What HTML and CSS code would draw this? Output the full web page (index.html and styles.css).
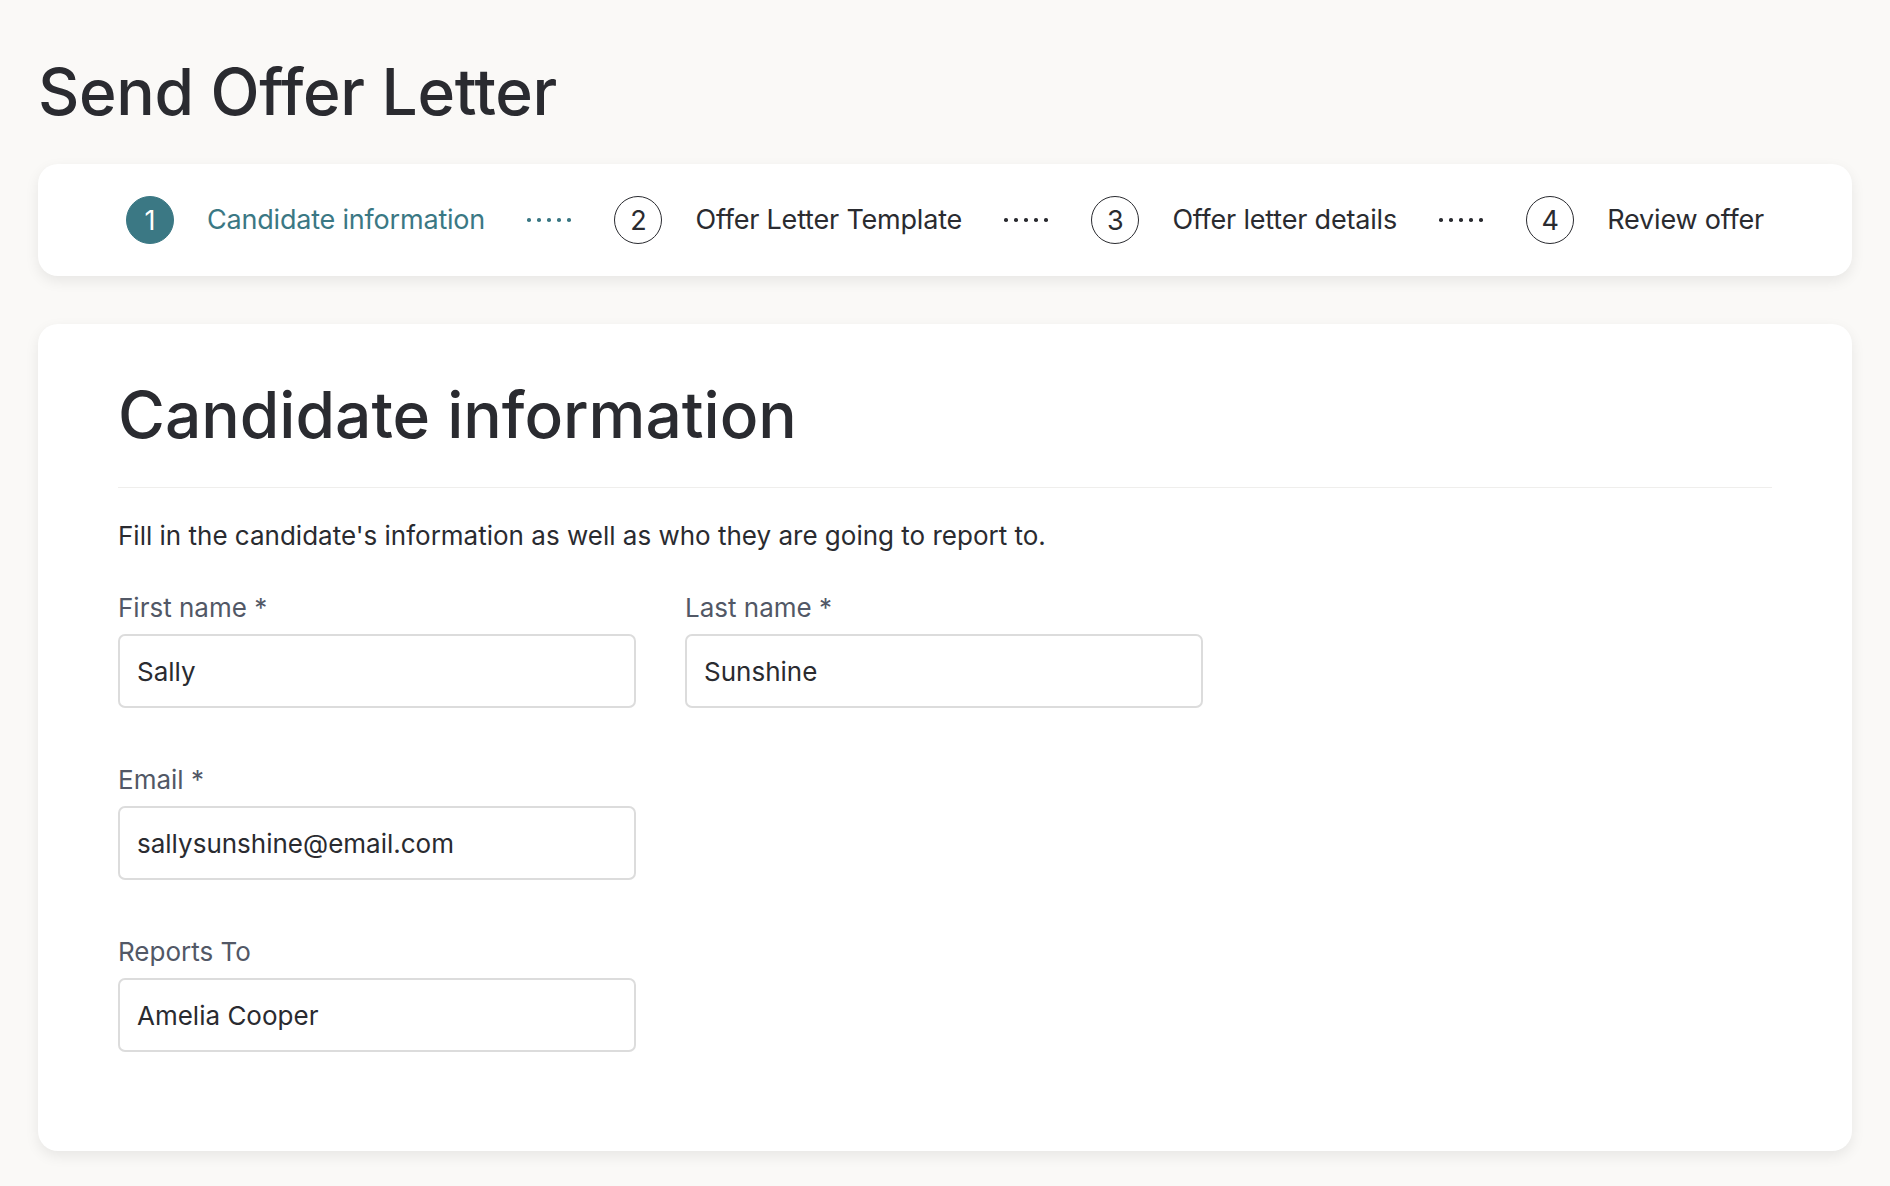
FILE: index.html
```html
<!DOCTYPE html>
<html lang="en">
<head>
<meta charset="utf-8">
<title>Send Offer Letter</title>
<link rel="stylesheet" href="styles.css">
</head>
<body>
<main class="page">
  <h1 class="page-title">Send Offer Letter</h1>

  <nav class="stepper" aria-label="Progress">
    <div class="step step-active">
      <span class="step-num">1</span>
      <span class="step-label">Candidate information</span>
    </div>
    <span class="step-dots step-dots-active"><i></i><i></i><i></i><i></i><i></i></span>
    <div class="step">
      <span class="step-num">2</span>
      <span class="step-label">Offer Letter Template</span>
    </div>
    <span class="step-dots"><i></i><i></i><i></i><i></i><i></i></span>
    <div class="step">
      <span class="step-num">3</span>
      <span class="step-label">Offer letter details</span>
    </div>
    <span class="step-dots"><i></i><i></i><i></i><i></i><i></i></span>
    <div class="step">
      <span class="step-num">4</span>
      <span class="step-label">Review offer</span>
    </div>
  </nav>

  <section class="card">
    <h2 class="card-title">Candidate information</h2>
    <p class="card-intro">Fill in the candidate's information as well as who they are going to report to.</p>

    <div class="form-row">
      <label class="field">
        <span class="field-label">First name *</span>
        <input class="field-input" type="text" value="Sally">
      </label>
      <label class="field">
        <span class="field-label">Last name *</span>
        <input class="field-input" type="text" value="Sunshine">
      </label>
    </div>

    <div class="form-row">
      <label class="field">
        <span class="field-label">Email *</span>
        <input class="field-input" type="email" value="sallysunshine@email.com">
      </label>
    </div>

    <div class="form-row">
      <label class="field">
        <span class="field-label">Reports To</span>
        <input class="field-input" type="text" value="Amelia Cooper">
      </label>
    </div>
  </section>
</main>
</body>
</html>
```

FILE: styles.css
```css
* {
  box-sizing: border-box;
}

html,
body {
  margin: 0;
  background: #faf9f7;
}

body {
  font-family: Inter, "Noto Sans", "Liberation Sans", sans-serif;
  color: #2a2b30;
}

.page {
  padding: 54px 38px 40px;
}

.page-title {
  margin: 0;
  font-size: 64px;
  line-height: 76px;
  font-weight: 500;
  letter-spacing: -0.3px;
  color: #2a2b30;
}

/* progress bar */
.stepper {
  margin-top: 34px;
  height: 112px;
  padding: 0 88px 0 88px;
  display: flex;
  align-items: center;
  justify-content: space-between;
  background: #fff;
  border-radius: 20px;
  box-shadow: 0 5px 14px rgba(0, 0, 0, 0.08);
}

.step {
  display: flex;
  align-items: center;
  gap: 33px;
}

.step-num {
  width: 48px;
  height: 48px;
  border-radius: 50%;
  border: 1.5px solid #2a2b30;
  display: flex;
  align-items: center;
  justify-content: center;
  font-size: 27px;
  line-height: 1;
  color: #2a2b30;
}

.step-label {
  font-size: 27px;
  line-height: 32px;
  color: #2a2b30;
  letter-spacing: -0.2px;
}

.step-active .step-num {
  background: #3b7884;
  border-color: #3b7884;
  color: #fff;
}

.step-active .step-label {
  color: #3b7884;
}

.step-dots {
  display: flex;
  gap: 6.5px;
  width: 45px;
}

.step-dots i {
  width: 3.5px;
  height: 3.5px;
  border-radius: 50%;
  background: #2a2b30;
}

.step-dots-active i {
  background: #3b7884;
}

/* main form card */
.card {
  margin-top: 48px;
  padding: 53px 80px 99px;
  background: #fff;
  border-radius: 20px;
  box-shadow: 0 5px 14px rgba(0, 0, 0, 0.08);
}

.card-title {
  margin: 0;
  padding-bottom: 34px;
  border-bottom: 1px solid #efeeec;
  font-size: 64px;
  line-height: 76px;
  font-weight: 500;
  color: #2a2b30;
}

.card-intro {
  margin: 32px 0 0;
  font-size: 26px;
  line-height: 32px;
  color: #2a2b30;
}

.form-row {
  display: flex;
  gap: 49px;
  margin-top: 56px;
}

.card-intro + .form-row {
  margin-top: 40px;
}

.field {
  display: flex;
  flex-direction: column;
  gap: 10px;
  width: 518px;
}

.field-label {
  font-size: 26px;
  line-height: 32px;
  color: #525866;
}

.field-input {
  width: 100%;
  height: 74px;
  padding: 0 17px;
  border: 2px solid #dcdcdc;
  border-radius: 7px;
  background: #fff;
  font-family: inherit;
  font-size: 26px;
  color: #2a2b30;
  outline: none;
}
```
